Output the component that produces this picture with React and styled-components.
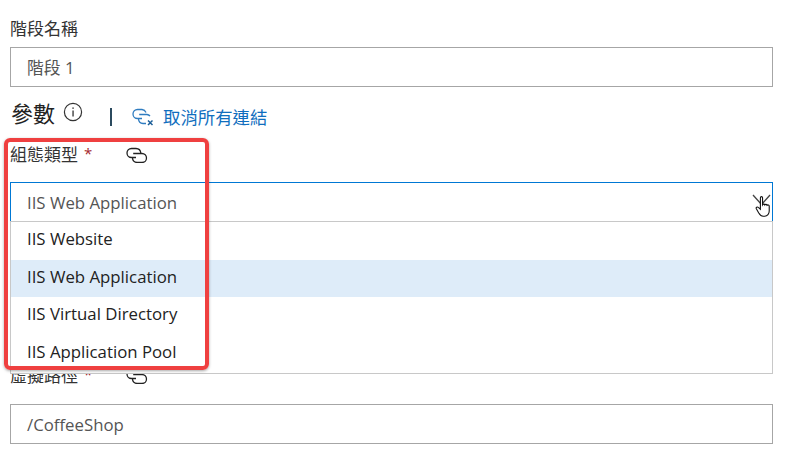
import React from 'react'
import styled, { createGlobalStyle } from 'styled-components'

const GlobalStyle = createGlobalStyle`
  html, body {
    margin: 0;
    padding: 0;
    background: #ffffff;
  }
  body {
    font-family: "Open Sans", "Noto Sans CJK TC", sans-serif;
    color: #323130;
  }
`

const Page = styled.div`
  position: relative;
  width: 789px;
  height: 463px;
  overflow: hidden;
  box-sizing: border-box;
  padding: 18px 16px 0 10px;
`

const Label = styled.div`
  display: flex;
  align-items: center;
  height: 22px;
  margin-top: ${p => p.$top || 0}px;
  font-size: 17px;
  line-height: 22px;
  color: #333333;
`

const Required = styled.span`
  color: #a4262c;
  margin-left: 6px;
  margin-bottom: 4px;
  font-size: 15px;
`

const LinkIcon = styled.svg`
  width: 22px;
  height: 16px;
  margin-left: ${p => p.$gap}px;
  fill: none;
  stroke: #222222;
  stroke-width: 1.3;
`

const Input = styled.div`
  box-sizing: border-box;
  height: 40px;
  margin-top: ${p => p.$top}px;
  padding: 0 16px 0 16px;
  display: flex;
  align-items: center;
  font-size: 16.8px;
  color: #555555;
  border: 1px solid ${p => (p.$focused ? '#0078d4' : '#a6a6a6')};
  background: #ffffff;
`

const Heading = styled.div`
  display: flex;
  align-items: center;
  height: 30px;
  margin-top: 11px;
`

const Title = styled.span`
  font-size: 22px;
  margin-left: 1px;
  margin-bottom: 3px;
  color: #222222;
`

const InfoIcon = styled.svg`
  width: 20px;
  height: 20px;
  margin-left: 8px;
  margin-bottom: 3px;
`

const Divider = styled.span`
  width: 2px;
  height: 18px;
  background: #2b4a5e;
  margin-left: 27px;
  margin-top: 7px;
`

const ClearLink = styled.a`
  display: flex;
  align-items: center;
  margin-left: 20px;
  margin-top: 7px;
  font-size: 17.4px;
  color: #106ebe;
`

const ClearIcon = styled.svg`
  width: 22px;
  height: 18px;
  margin-right: 9px;
  fill: none;
  stroke: #2f7cc0;
  stroke-width: 1.3;
`

const SelectWrap = styled.div`
  position: relative;
  margin-bottom: 143px;
`

const Chevron = styled.svg`
  position: absolute;
  right: 1px;
  top: 12px;
  width: 20px;
  height: 12px;
  fill: none;
  stroke: #444444;
  stroke-width: 1.3;
`

const Cursor = styled.svg`
  position: absolute;
  right: 0;
  top: 13px;
  width: 18px;
  height: 24px;
  z-index: 4;
`

const Menu = styled.div`
  position: absolute;
  left: 0;
  right: 0;
  top: 39px;
  height: 153px;
  box-sizing: border-box;
  border: 1px solid #c8c8c8;
  background: #ffffff;
  z-index: 2;
`

const Option = styled.div`
  height: 37.5px;
  box-sizing: border-box;
  padding: 0 0 4px 16px;
  display: flex;
  align-items: center;
  font-size: 16.8px;
  color: #222222;
  background: ${p => (p.$selected ? '#deecf9' : 'transparent')};
`

const Highlight = styled.div`
  position: absolute;
  left: 4px;
  top: 138px;
  width: 205px;
  height: 232px;
  box-sizing: border-box;
  border: 4px solid #ef4040;
  border-radius: 6px;
  box-shadow: 0 1px 3px rgba(0, 0, 0, 0.35);
  z-index: 3;
`

const Link = ({ gap }) => (
  <LinkIcon $gap={gap} viewBox="0 0 22 16">
    <path d="M10 10.500H5.500a4.500 4.500 0 0 1 0-9H10a5 5 0 0 1 4.800 4.500" />
    <path d="M7.200 6.500H16a4.500 4.500 0 0 1 0 9h-5a4.800 4.800 0 0 1-4.500-4.500" />
  </LinkIcon>
)

const options = ['IIS Website', 'IIS Web Application', 'IIS Virtual Directory', 'IIS Application Pool']

export default function App() {
  return (
    <Page>
      <GlobalStyle />
      <Label>階段名稱</Label>
      <Input $top={7}>階段 1</Input>

      <Heading>
        <Title>參數</Title>
        <InfoIcon viewBox="0 0 20 20">
          <circle cx="10" cy="10" r="8.6" fill="none" stroke="#333" strokeWidth="1.2" />
          <rect x="9.400" y="8.500" width="1.300" height="6" fill="#333" />
          <rect x="9.400" y="5.400" width="1.300" height="1.500" fill="#333" />
        </InfoIcon>
        <Divider />
        <ClearLink>
          <ClearIcon viewBox="0 0 22 18">
            <path d="M10 10.500H5.500a4.500 4.500 0 0 1 0-9H10a5 5 0 0 1 4 3" />
            <path d="M7.200 6.500H15a4.500 4.500 0 0 1 3 1.500M6.500 11a4.800 4.800 0 0 0 4.500 4.500h3" />
            <path d="M16 12.500l4.500 4.500M20.500 12.500L16 17" stroke="#1d5f99" strokeWidth="1.500" />
          </ClearIcon>
          取消所有連結
        </ClearLink>
      </Heading>

      <Label $top={16}>
        組態類型<Required>*</Required>
        <Link gap={34} />
      </Label>
      <SelectWrap>
        <Input $top={16} $focused>IIS Web Application</Input>
        <Chevron viewBox="0 0 20 12">
          <path d="M1 1l8.500 9.500L18 1" />
        </Chevron>
        <Cursor viewBox="0 0 20 25">
          <path
            d="M6 2.200c0-1.600 2.400-1.600 2.400 0V10c.6-1 2.200-1 2.500.2.600-1 2.200-.8 2.500.4.800-.8 2.300-.4 2.400.9v5.500c0 3-2 5.800-5 5.800H9c-2.500 0-3.500-1.600-5-4L1.500 14.500c-.8-1.500 1-2.600 2.200-1.500L6 15z"
            fill="#ffffff"
            stroke="#111111"
            strokeWidth="1.200"
          />
        </Cursor>
        <Menu>
          {options.map(o => (
            <Option key={o} $selected={o === 'IIS Web Application'}>{o}</Option>
          ))}
        </Menu>
      </SelectWrap>

      <Label>
        虛擬路徑<Required>*</Required>
        <Link gap={34} />
      </Label>
      <Input $top={17}>/CoffeeShop</Input>

      <Highlight />
    </Page>
  )
}
